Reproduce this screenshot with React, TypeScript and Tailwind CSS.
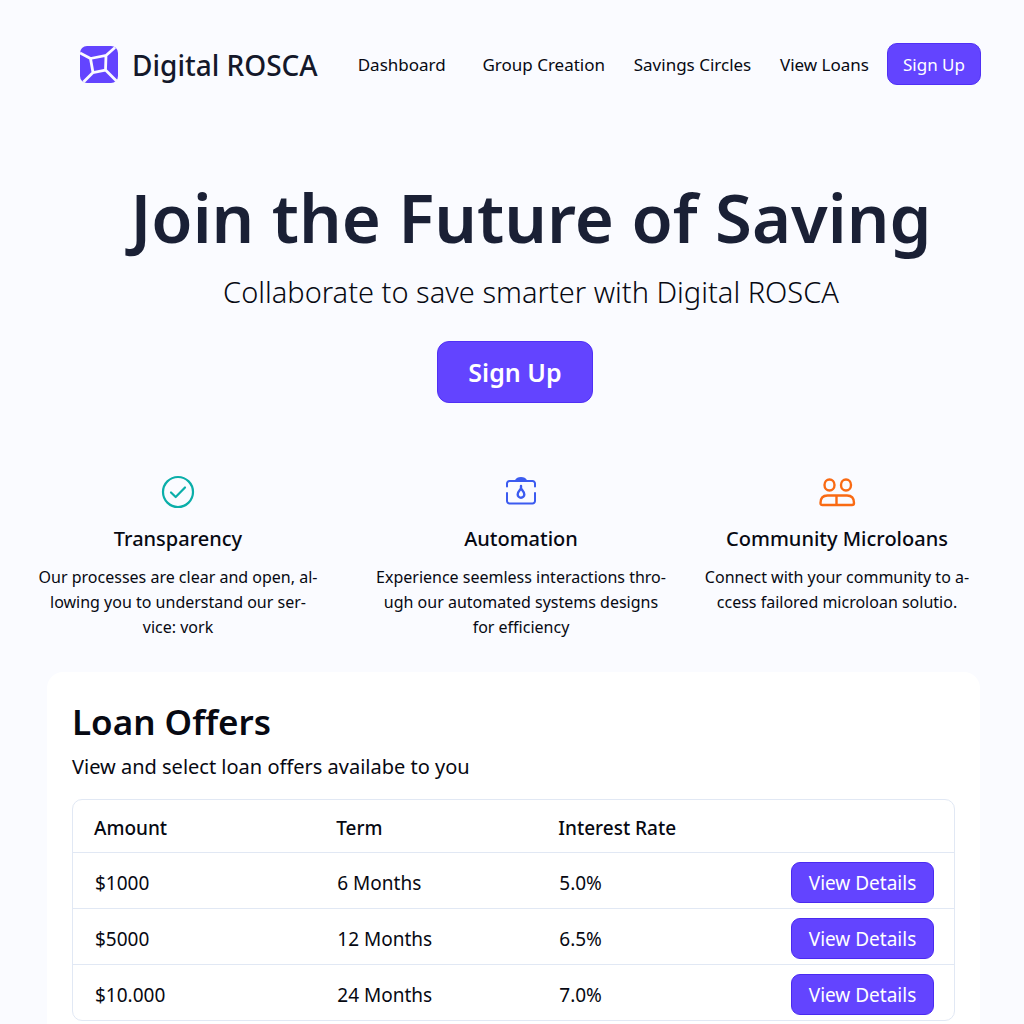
const features = [
  {
    title: 'Transparency',
    lines: ['Our processes are clear and open, al-', 'lowing you to understand our ser-', 'vice: vork'],
    icon: <CheckIcon />,
  },
  {
    title: 'Automation',
    lines: ['Experience seemless interactions thro-', 'ugh our automated systems designs', 'for efficiency'],
    icon: <ClipboardIcon />,
  },
  {
    title: 'Community Microloans',
    lines: ['Connect with your community to a-', 'ccess failored microloan solutio.'],
    icon: <PeopleIcon />,
  },
];

const offers = [
  { amount: '$1000', term: '6 Months', rate: '5.0%' },
  { amount: '$5000', term: '12 Months', rate: '6.5%' },
  { amount: '$10.000', term: '24 Months', rate: '7.0%' },
];

function Logo() {
  return (
    <svg width="38" height="37" viewBox="0 0 38 37" fill="none" aria-hidden="true">
      <rect width="38" height="37" rx="7" fill="#6344ff" />
      <path
        d="M10.500 12.500 26 9.500 25.500 24 13 26.500ZM10.500 12.500 0 7M26 9.500 35 1.500M25.500 24 36.500 35M13 26.500 3.500 36"
        stroke="#fafaff"
        strokeWidth="2.800"
      />
    </svg>
  );
}

function CheckIcon() {
  return (
    <svg width="34" height="34" viewBox="0 0 34 34" fill="none" stroke="#0aaea9" strokeWidth="2.2" strokeLinecap="round" strokeLinejoin="round" aria-hidden="true">
      <circle cx="17" cy="17" r="15" />
      <path d="m10 17.500 4.700 4.500 9.300-9.500" />
    </svg>
  );
}

function ClipboardIcon() {
  return (
    <svg width="34" height="34" viewBox="0 0 34 34" fill="none" stroke="#3b5bf0" strokeWidth="2" strokeLinecap="round" strokeLinejoin="round" aria-hidden="true">
      <path d="M3 11.500V8.500a2.500 2.500 0 0 1 2.500-2.500h23A2.500 2.500 0 0 1 31 8.500V11.500M31 18v8a2.500 2.500 0 0 1-2.500 2.500h-23A2.500 2.500 0 0 1 3 26v-8" />
      <path d="M12 5.500c1-2 2.500-2.500 5-2.500s4 .5 5 2.500Z" fill="#3b5bf0" />
      <path d="M17 11v3.500M17 13.500c-1.500 2-3.300 3.500-3.300 5.900a3.300 3.300 0 0 0 6.600 0C20.300 17 18.500 15.500 17 13.500Z" strokeWidth="2.400" />
    </svg>
  );
}

function PeopleIcon() {
  return (
    <svg width="38" height="34" viewBox="0 0 38 34" fill="none" stroke="#f96a13" strokeWidth="2.400" strokeLinejoin="round" aria-hidden="true">
      <ellipse cx="11.500" cy="10" rx="5" ry="5.500" />
      <ellipse cx="28" cy="10" rx="5" ry="5.500" />
      <path d="M2.500 28c0-5 2.500-7.500 7-7.500h19.500c4.500 0 7 2.500 7 7.500 0 1.500-.7 2-2 2H4.500c-1.300 0-2-.5-2-2ZM18.500 20.500V30" />
    </svg>
  );
}

export default function App() {
  return (
    <div className="min-h-screen bg-[#fafbff] font-['Noto_Sans',sans-serif] text-[#070912]">
      <header className="flex items-center pt-[43px] pr-[43px] pl-20">
        <a href="#" className="flex items-center gap-3.5 whitespace-nowrap text-[28px] leading-10 font-medium text-[#14182a]">
          <Logo />
          <span className="pt-0.5">Digital ROSCA</span>
        </a>
        <nav className="flex flex-1 items-center justify-between pt-0.5 pr-[18px] pl-10 text-[17px] whitespace-nowrap">
          <a href="#dashboard" className="mr-2">Dashboard</a>
          <a href="#groups">Group Creation</a>
          <a href="#circles">Savings Circles</a>
          <a href="#loans">View Loans</a>
        </nav>
        <button className="h-[42px] w-[94px] shrink-0 rounded-[10px] border border-[#5030f5] bg-[#6344ff] pt-0.5 text-[17px] text-white">
          Sign Up
        </button>
      </header>

      <main>
        <section className="flex flex-col items-center pt-[84px] pl-1.5 text-center">
          <div className="pl-8">
            <h1 className="text-[67px] leading-[96px] font-semibold whitespace-nowrap text-[#1a2035]">Join the Future of Saving</h1>
            <p className="text-[29px] leading-[54px] font-light whitespace-nowrap">Collaborate to save smarter with Digital ROSCA</p>
          </div>
          <button className="mt-[22px] h-[62px] w-[156px] rounded-xl border border-[#5030f5] bg-[#6344ff] pt-0.5 text-[25px] font-semibold text-white">
            Sign Up
          </button>
        </section>

        <section className="grid grid-cols-[340fr_346fr_286fr] pt-[72px] pr-11 pl-2 text-center">
          {features.map((f) => (
            <article key={f.title} className="flex flex-col items-center">
              {f.icon}
              <h2 className="mt-3 text-[20px] leading-9 font-medium whitespace-nowrap">{f.title}</h2>
              <p className="mt-2 text-base leading-[25px] whitespace-nowrap">
                {f.lines.map((line) => (
                  <span key={line} className="block">{line}</span>
                ))}
              </p>
            </article>
          ))}
        </section>

        <section className="mt-8 mr-11 ml-[47px] rounded-2xl bg-white px-[25px] pt-[25px] pb-6">
          <h2 className="text-[35px] leading-[50px] font-semibold">Loan Offers</h2>
          <p className="mt-1 text-[20px] leading-8">View and select loan offers availabe to you</p>
          <div className="mt-4 overflow-hidden rounded-[10px] border border-[#e1e8f4]">
            <table className="w-full table-fixed border-collapse text-left text-[19px]">
              <thead>
                <tr className="h-[52px]">
                  <th className="w-[27.5%] pt-1 pl-[21px] font-medium">Amount</th>
                  <th className="w-[25.2%] pt-1 pl-[21px] font-medium">Term</th>
                  <th className="w-1/4 pt-1 pl-[21px] font-medium">Interest Rate</th>
                  <th aria-label="Actions" />
                </tr>
              </thead>
              <tbody>
                {offers.map((o) => (
                  <tr key={o.amount} className="h-14 border-t border-[#e1e8f4]">
                    <td className="pt-1.5 pl-[22px]">{o.amount}</td>
                    <td className="pt-1.5 pl-[22px]">{o.term}</td>
                    <td className="pt-1.5 pl-[22px]">{o.rate}</td>
                    <td className="pt-1 pr-5 text-right">
                      <button className="h-[41px] w-[143px] rounded-[9px] border border-[#4a2af0] bg-[#6344ff] pt-0.5 align-middle text-[19px] text-white">
                        View Details
                      </button>
                    </td>
                  </tr>
                ))}
              </tbody>
            </table>
          </div>
        </section>
      </main>
    </div>
  );
}
